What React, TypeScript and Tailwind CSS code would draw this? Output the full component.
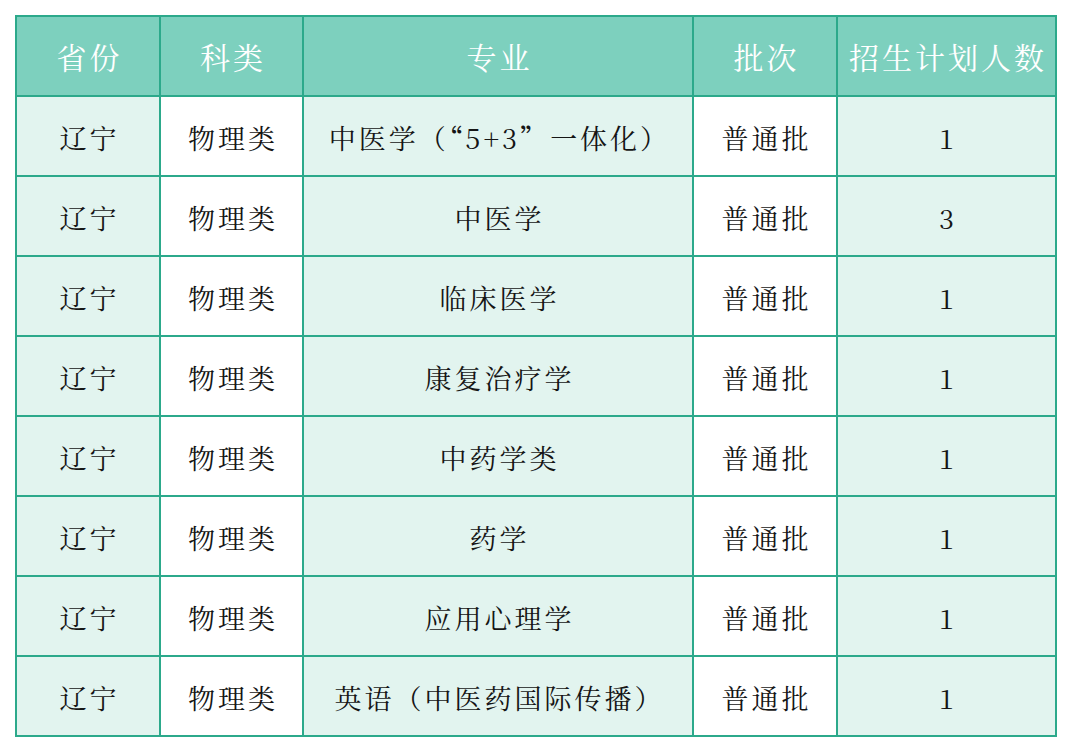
import React from "react";

const Q = ({ c }: { c: string }) => (
  <span style={{ fontFamily: '"Noto Sans CJK SC", sans-serif' }}>{c}</span>
);

const rows: [string, string, React.ReactNode, string, string][] = [
  [
    "辽宁",
    "物理类",
    <>
      中医学（<Q c="“" />5+3<Q c="”" />一体化）
    </>,
    "普通批",
    "1",
  ],
  ["辽宁", "物理类", "中医学", "普通批", "3"],
  ["辽宁", "物理类", "临床医学", "普通批", "1"],
  ["辽宁", "物理类", "康复治疗学", "普通批", "1"],
  ["辽宁", "物理类", "中药学类", "普通批", "1"],
  ["辽宁", "物理类", "药学", "普通批", "1"],
  ["辽宁", "物理类", "应用心理学", "普通批", "1"],
  ["辽宁", "物理类", "英语（中医药国际传播）", "普通批", "1"],
];

const headers = ["省份", "科类", "专业", "批次", "招生计划人数"];

const font = {
  fontFamily:
    '"Noto Serif CJK SC", "Liberation Serif", "Noto Sans CJK SC", serif',
};

export default function App() {
  return (
    <div className="w-[1072px] h-[752px] bg-white pt-[15px] pl-[15px]" style={font}>
      <div className="w-[1042px] grid grid-cols-[142px_141px_388px_142px_217px] auto-rows-[78px] gap-[2px] p-[2px] bg-[#2ca98b]">
        {headers.map((h) => (
          <div
            key={h}
            className="bg-[#7dd0be] flex items-center justify-center text-white text-[30px] tracking-[3px] whitespace-nowrap"
          >
            <span className="-mr-[3px]">{h}</span>
          </div>
        ))}
        {rows.map((r, i) =>
          r.map((c, j) => (
            <div
              key={i + "-" + j}
              className={
                (j % 2 === 0 ? "bg-[#e2f4ef]" : "bg-white") +
                " flex items-center justify-center pt-[4px] text-[#151515] text-[27px] tracking-[3px] whitespace-nowrap"
              }
            >
              <span className="-mr-[3px]">{c}</span>
            </div>
          ))
        )}
      </div>
    </div>
  );
}
